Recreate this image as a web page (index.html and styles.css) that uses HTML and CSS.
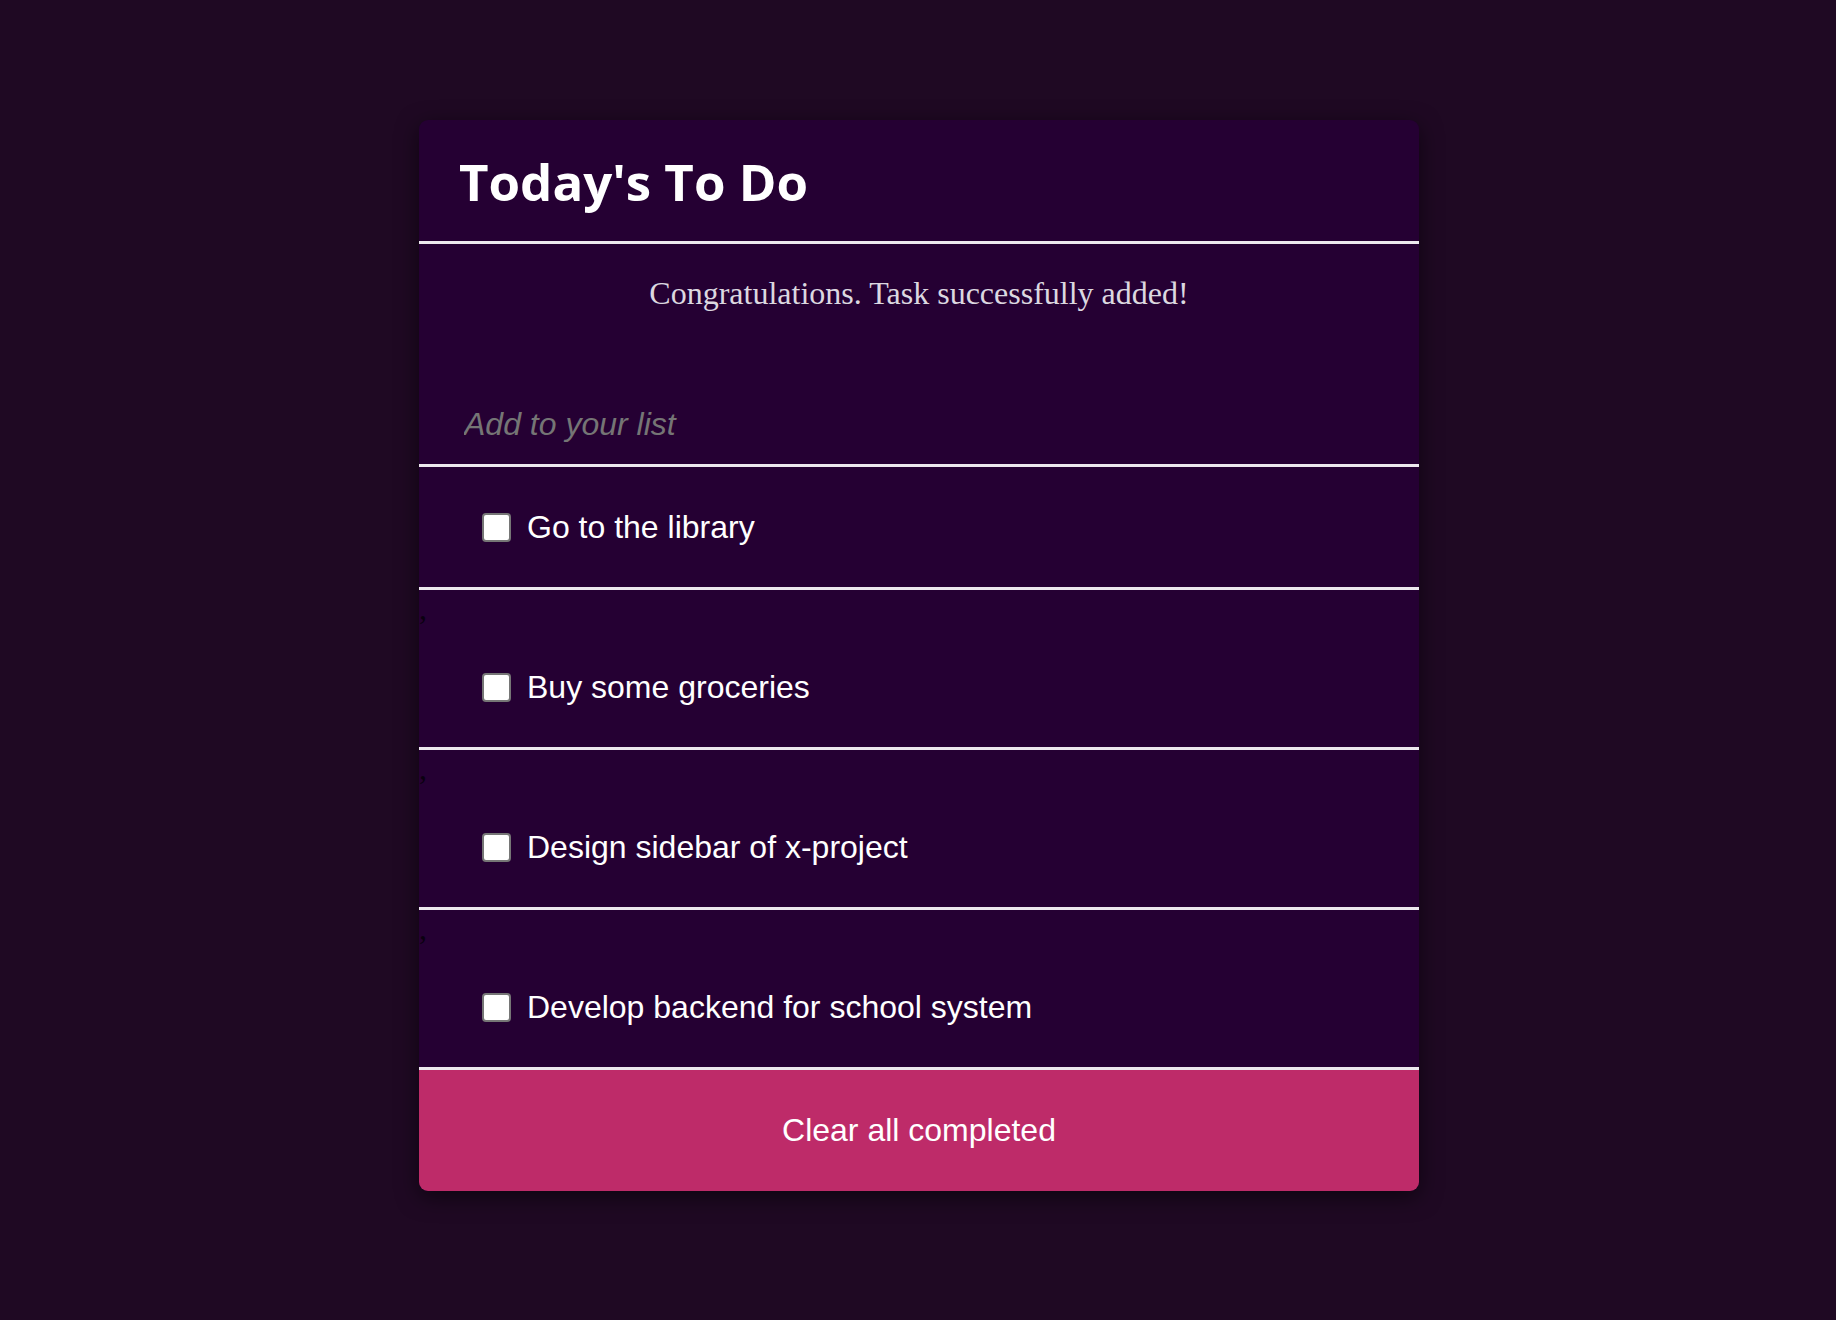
FILE: index.html
```html
<!DOCTYPE html>
<html lang="en">
<head>
<meta charset="utf-8">
<title>Today's To Do</title>
<link rel="stylesheet" href="styles.css">
</head>
<body>
<main class="card">
  <header class="card-header">
    <h1 class="title">Today's To Do</h1>
  </header>
  <section class="form">
    <p class="message">Congratulations. Task successfully added!</p>
    <input class="add-input" type="text" placeholder="Add to your list">
  </section>
  <div class="list">
    <label class="item"><input class="check" type="checkbox"><span class="item-text">Go to the library</span></label>
    <span class="sep">,</span>
    <label class="item"><input class="check" type="checkbox"><span class="item-text">Buy some groceries</span></label>
    <span class="sep">,</span>
    <label class="item"><input class="check" type="checkbox"><span class="item-text">Design sidebar of x-project</span></label>
    <span class="sep">,</span>
    <label class="item"><input class="check" type="checkbox"><span class="item-text">Develop backend for school system</span></label>
  </div>
  <button class="clear-btn" type="button">Clear all completed</button>
</main>
</body>
</html>
```

FILE: styles.css
```css
* {
  box-sizing: border-box;
}

html, body {
  margin: 0;
  padding: 0;
}

body {
  background: #1f0923;
  min-height: 1320px;
  padding-top: 120px;
  padding-left: 2px;
  font-family: "Liberation Serif", "Times New Roman", serif;
}

.card {
  width: 1000px;
  margin: 0 auto;
  background: #250033;
  border-radius: 9px;
  box-shadow: 0 6px 22px rgba(0, 0, 0, 0.55);
  display: flex;
  flex-direction: column;
}

.card-header {
  padding: 30px 40px 29px;
  border-bottom: 3px solid #ece8ee;
}

.title {
  margin: 0;
  font-family: "Comic Sans MS", "Open Sans", sans-serif;
  font-weight: 700;
  font-size: 51px;
  line-height: 62px;
  color: #ffffff;
}

.form {
  display: flex;
  flex-direction: column;
  padding-top: 31px;
}

.message {
  margin: 0;
  text-align: center;
  font-family: "Liberation Serif", "Times New Roman", serif;
  font-size: 32px;
  line-height: 37px;
  color: #dcd8e0;
}

.add-input {
  margin-top: 66px;
  height: 89px;
  padding: 7px 45px 0;
  border: none;
  border-bottom: 3px solid #ece8ee;
  background: transparent;
  font-family: "Liberation Sans", Arial, sans-serif;
  font-size: 32px;
  color: #ffffff;
  outline: none;
}

.add-input::placeholder {
  color: #757575;
  font-style: italic;
}

.list {
  display: flex;
  flex-direction: column;
}

.sep {
  display: block;
  font-family: "Liberation Serif", "Times New Roman", serif;
  font-size: 32px;
  line-height: 37px;
  color: #0a0010;
}

.item {
  display: flex;
  align-items: center;
  gap: 16px;
  height: 123px;
  padding-left: 63px;
  border-bottom: 3px solid #ece8ee;
  font-family: "Liberation Sans", Arial, sans-serif;
  font-size: 32px;
  color: #ffffff;
}

.check {
  appearance: none;
  -webkit-appearance: none;
  margin: 0;
  width: 29px;
  height: 29px;
  background: #ffffff;
  border: 2px solid #767676;
  border-radius: 4px;
  flex: none;
}

.clear-btn {
  height: 121px;
  border: none;
  background: #be2b69;
  color: #ffffff;
  font-family: "Liberation Sans", Arial, sans-serif;
  font-size: 32px;
  border-radius: 0 0 9px 9px;
  padding: 0;
}
```
